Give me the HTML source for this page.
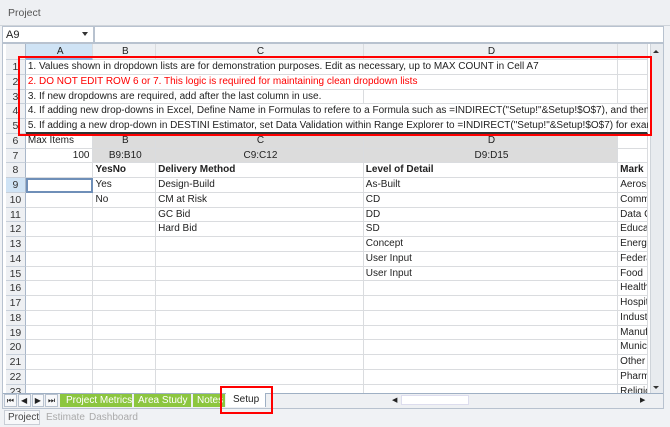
<!DOCTYPE html>
<html><head><style>
*{box-sizing:border-box;margin:0;padding:0}
body{width:670px;height:427px;overflow:hidden;background:#f0f2f5;font-family:"Liberation Sans",sans-serif;font-size:10px;color:#222;position:relative}
.abs{position:absolute;white-space:nowrap}
.grid{position:absolute;left:6px;top:44px;width:642px;height:349px;overflow:hidden;background:#fff}
.row{display:flex;height:14.76px;line-height:14px}
.row>div{border-right:1px solid #dadcdf;border-bottom:1px solid #dadcdf;white-space:nowrap;overflow:visible;padding-left:2px}
.h{width:20px;background:#eef0f3;text-align:center;padding-left:0!important;border-right:1px solid #a9b7c9!important;border-bottom:1px solid #c8d0da!important;color:#333;font-size:10.5px}
.a{width:68px}.b{width:63px}.c{width:209px}.d{width:256px}.e{width:30px;overflow:hidden!important}
.g{background:#dcdcdc}
.ov{border-right:none!important;position:relative;z-index:2}
b{font-weight:bold}
</style></head><body>
<div class="abs" style="left:0;top:0;width:670px;height:26px;background:#eef0f3;border-bottom:1px solid #cfd4da"></div>
<div class="abs" style="left:8px;top:7px;font-size:10.5px;color:#555">Project</div>
<div class="abs" style="left:2px;top:26px;width:92px;height:17px;background:#fff;border:1px solid #b8c2cf"></div>
<div class="abs" style="left:6px;top:29px;font-size:11px">A9</div>
<div class="abs" style="left:82px;top:32px;border-left:3.5px solid transparent;border-right:3.5px solid transparent;border-top:4px solid #333"></div>
<div class="abs" style="left:94px;top:26px;width:570px;height:17px;background:#fff;border:1px solid #b8c2cf"></div>
<div class="abs" style="left:2px;top:43px;width:662px;height:366px;border:1px solid #b8c2cf;background:#fff"></div>
<div class="grid">
<div class="row" style="height:16px;line-height:16px;background:#eef0f3"><div class="h"></div><div class="a" style="background:#cfe3f5;text-align:center;border-bottom:2px solid #8db4e2">A</div><div class="b" style="text-align:center">B</div><div class="c" style="text-align:center">C</div><div class="d" style="text-align:center">D</div><div class="e"></div></div>
<div class="row"><div class="h">1</div><div class="a ov">1. Values shown in dropdown lists are for demonstration purposes. Edit as necessary, up to MAX COUNT in Cell A7</div><div class="b" style="border-right:none"></div><div class="c" style="border-right:none"></div><div class="d"></div><div class="e"></div></div>
<div class="row"><div class="h">2</div><div class="a ov" style="color:#f00">2. DO NOT EDIT ROW 6 or 7. This logic is required for maintaining clean dropdown lists</div><div class="b" style="border-right:none"></div><div class="c" style="border-right:none"></div><div class="d"></div><div class="e"></div></div>
<div class="row"><div class="h">3</div><div class="a ov">3. If new dropdowns are required, add after the last column in use.</div><div class="b" style="border-right:none"></div><div class="c"></div><div class="d"></div><div class="e"></div></div>
<div class="row"><div class="h">4</div><div class="a ov">4. If adding new drop-downs in Excel, Define Name in Formulas to refere to a Formula such as =INDIRECT("Setup!"&amp;Setup!$O$7), and then set</div><div class="b" style="border-right:none"></div><div class="c" style="border-right:none"></div><div class="d" style="border-right:none"></div><div class="e"></div></div>
<div class="row"><div class="h">5</div><div class="a ov" style="border-bottom:2px solid #333">5. If adding a new drop-down in DESTINI Estimator, set Data Validation within Range Explorer to =INDIRECT("Setup!"&amp;Setup!$O$7) for example</div><div class="b" style="border-right:none;border-bottom:2px solid #333"></div><div class="c" style="border-right:none;border-bottom:2px solid #333"></div><div class="d" style="border-right:none;border-bottom:2px solid #333"></div><div class="e" style="border-bottom:2px solid #333"></div></div>
<div class="row"><div class="h">6</div><div class="a">Max Items</div><div class="b g" style="text-align:center">B</div><div class="c g" style="text-align:center">C</div><div class="d g" style="text-align:center">D</div><div class="e"></div></div>
<div class="row"><div class="h">7</div><div class="a" style="text-align:right;padding-right:3px">100</div><div class="b g" style="text-align:center">B9:B10</div><div class="c g" style="text-align:center">C9:C12</div><div class="d g" style="text-align:center">D9:D15</div><div class="e"></div></div>
<div class="row"><div class="h">8</div><div class="a"></div><div class="b"><b>YesNo</b></div><div class="c"><b>Delivery Method</b></div><div class="d"><b>Level of Detail</b></div><div class="e"><b>Mark</b></div></div>
<div class="row"><div class="h" style="background:#cfe3f5">9</div><div class="a" style="border:2px solid #6f8fb8"></div><div class="b">Yes</div><div class="c">Design-Build</div><div class="d">As-Built</div><div class="e">Aerospace</div></div>
<div class="row"><div class="h">10</div><div class="a"></div><div class="b">No</div><div class="c">CM at Risk</div><div class="d">CD</div><div class="e">Commercial</div></div>
<div class="row"><div class="h">11</div><div class="a"></div><div class="b"></div><div class="c">GC Bid</div><div class="d">DD</div><div class="e">Data Center</div></div>
<div class="row"><div class="h">12</div><div class="a"></div><div class="b"></div><div class="c">Hard Bid</div><div class="d">SD</div><div class="e">Education</div></div>
<div class="row"><div class="h">13</div><div class="a"></div><div class="b"></div><div class="c"></div><div class="d">Concept</div><div class="e">Energy</div></div>
<div class="row"><div class="h">14</div><div class="a"></div><div class="b"></div><div class="c"></div><div class="d">User Input</div><div class="e">Federal</div></div>
<div class="row"><div class="h">15</div><div class="a"></div><div class="b"></div><div class="c"></div><div class="d">User Input</div><div class="e">Food</div></div>
<div class="row"><div class="h">16</div><div class="a"></div><div class="b"></div><div class="c"></div><div class="d"></div><div class="e">Healthcare</div></div>
<div class="row"><div class="h">17</div><div class="a"></div><div class="b"></div><div class="c"></div><div class="d"></div><div class="e">Hospitality</div></div>
<div class="row"><div class="h">18</div><div class="a"></div><div class="b"></div><div class="c"></div><div class="d"></div><div class="e">Industrial</div></div>
<div class="row"><div class="h">19</div><div class="a"></div><div class="b"></div><div class="c"></div><div class="d"></div><div class="e">Manufacturing</div></div>
<div class="row"><div class="h">20</div><div class="a"></div><div class="b"></div><div class="c"></div><div class="d"></div><div class="e">Municipal</div></div>
<div class="row"><div class="h">21</div><div class="a"></div><div class="b"></div><div class="c"></div><div class="d"></div><div class="e">Other</div></div>
<div class="row"><div class="h">22</div><div class="a"></div><div class="b"></div><div class="c"></div><div class="d"></div><div class="e">Pharma</div></div>
<div class="row"><div class="h">23</div><div class="a"></div><div class="b"></div><div class="c"></div><div class="d"></div><div class="e">Religious</div></div>
</div>
<div class="abs" style="left:650px;top:44px;width:13px;height:349px;background:#e8ebef;border-left:1px solid #cfd4da"></div>
<div class="abs" style="left:653px;top:50px;border-left:3px solid transparent;border-right:3px solid transparent;border-bottom:3px solid #333"></div>
<div class="abs" style="left:653px;top:386px;border-left:3px solid transparent;border-right:3px solid transparent;border-top:3px solid #333"></div>
<div class="abs" style="left:3px;top:393px;width:660px;height:15px;background:#eef0f3;border-top:1px solid #9fb0c4"></div>
<div class="abs" style="left:4px;top:394px;width:54px;height:13px;display:flex;gap:1px">
<div style="flex:1;border:1px solid #b8c2cf;background:#f7f8fa;font-size:8px;text-align:center;line-height:11px">⏮</div>
<div style="flex:1;border:1px solid #b8c2cf;background:#f7f8fa;font-size:8px;text-align:center;line-height:11px">◀</div>
<div style="flex:1;border:1px solid #b8c2cf;background:#f7f8fa;font-size:8px;text-align:center;line-height:11px">▶</div>
<div style="flex:1;border:1px solid #b8c2cf;background:#f7f8fa;font-size:8px;text-align:center;line-height:11px">⏭</div>
</div>
<div class="abs" style="left:60px;top:394px;width:72px;height:13px;background:#8cc63f;color:#fff;padding-left:6px;line-height:13px">Project Metrics</div>
<div class="abs" style="left:134px;top:394px;width:57px;height:13px;background:#8cc63f;color:#fff;padding-left:4px;line-height:13px">Area Study</div>
<div class="abs" style="left:193px;top:394px;width:32px;height:13px;background:#8cc63f;color:#fff;padding-left:4px;line-height:13px;overflow:hidden">Notes</div>
<div class="abs" style="left:226px;top:393px;width:40px;height:14px;background:#fff;padding-left:7px;line-height:13px;border-right:1px solid #9fb0c4">Setup</div>
<div class="abs" style="left:392px;top:396px;font-size:7px">◀</div>
<div class="abs" style="left:401px;top:395px;width:68px;height:10px;background:#fff;border:1px solid #dde"></div>
<div class="abs" style="left:640px;top:396px;font-size:7px">▶</div>
<div class="abs" style="left:4px;top:410px;width:36px;height:15px;border:1px solid #c9ced6;background:#f7f8fa;padding-left:3px;line-height:13px;color:#444">Project</div>
<div class="abs" style="left:46px;top:411px;color:#aaa;line-height:13px">Estimate</div>
<div class="abs" style="left:89px;top:411px;color:#aaa;line-height:13px">Dashboard</div>
<div class="abs" style="left:18px;top:56px;width:634px;height:80px;border:2px solid #f00;z-index:5"></div>
<div class="abs" style="left:220px;top:386px;width:53px;height:28px;border:2px solid #f00;z-index:5"></div>
</body></html>
